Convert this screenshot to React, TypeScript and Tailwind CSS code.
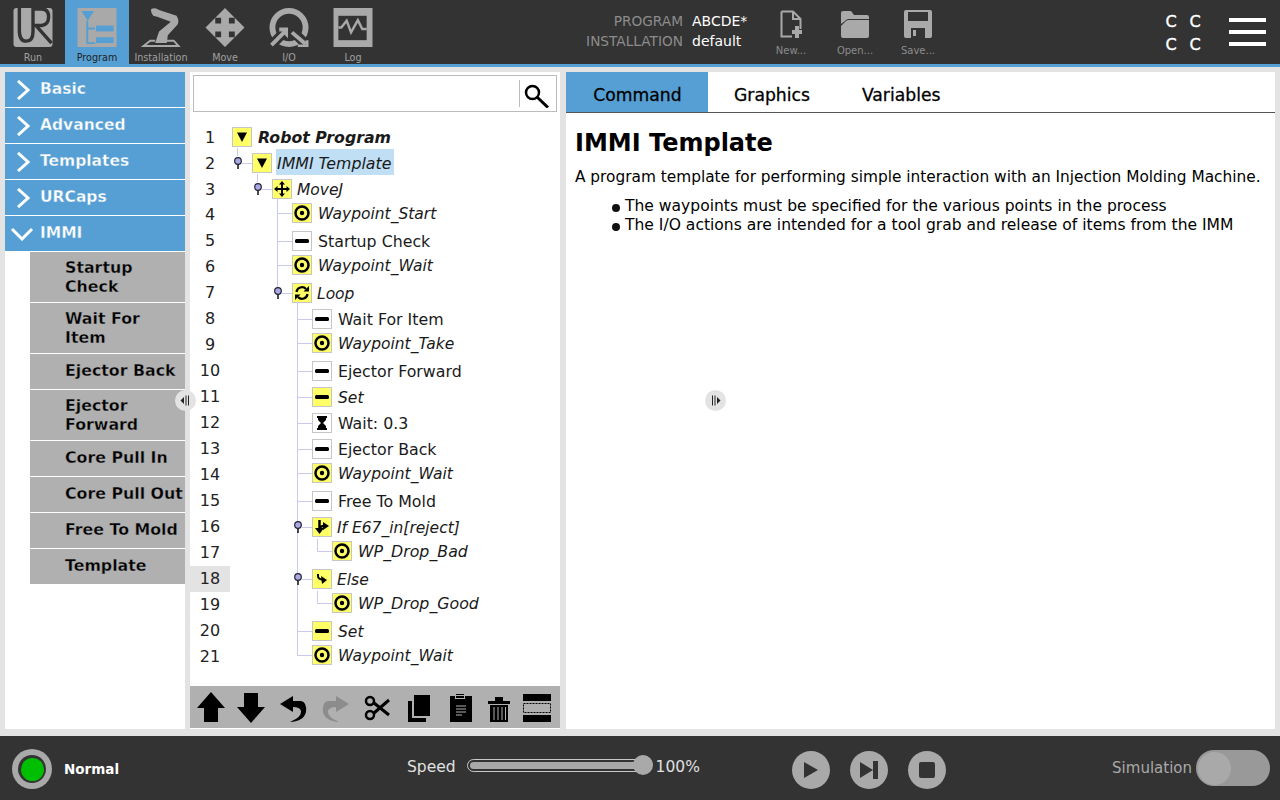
import type { ReactNode } from "react";

const GRAY = "#a9a9a9";

function RunIcon() {
  return (
    <svg width="40" height="40" viewBox="0 0 40 40">
      <rect width="40" height="40" rx="3" fill={GRAY} />
      <path d="M6 0V23Q6 34 13 34Q20 34 20 24V1H29Q36 1 36 9Q36 17 29 18H23L39 36" fill="none" stroke="#333" strokeWidth="3.5" />
    </svg>
  );
}
function ProgramIcon() {
  return (
    <svg width="40" height="40" viewBox="0 0 40 40">
      <rect width="40" height="40" fill={GRAY} />
      <path d="M4 3H17L10.5 13Z" fill="#569fd4" />
      <path d="M10 13V36H18M10 21H18" fill="none" stroke="#569fd4" strokeWidth="2" />
      <rect x="19" y="18" width="18" height="6" fill="#569fd4" />
      <rect x="19" y="30" width="18" height="6" fill="#569fd4" />
    </svg>
  );
}
function InstallIcon() {
  return (
    <svg width="40" height="40" viewBox="0 0 40 40">
      <path d="M14 33.500H9L2 39H38L33 33.500H26" fill="none" stroke={GRAY} strokeWidth="2" />
      <path d="M10 1Q14 -1 18 2L36 8Q39 13 37 17L27 28L26 36H14L18 24L30 14L16 9L12 8Q9 4 10 1Z" fill={GRAY} />
    </svg>
  );
}
function MoveIcon() {
  return (
    <svg width="40" height="40" viewBox="0 0 40 40" fill={GRAY}>
      <path d="M20 0L30 10H24V16H30V10L40 20L30 30V24H24V30H30L20 40L10 30H16V24H10V30L0 20L10 10V16H16V10H10Z" />
    </svg>
  );
}
function IoIcon() {
  return (
    <svg width="40" height="40" viewBox="0 0 40 40">
      <circle cx="20" cy="20" r="17" fill="none" stroke={GRAY} strokeWidth="6" />
      <path d="M-1 41L18 22M22 22L42 42" stroke="#333" strokeWidth="10" />
      <path d="M2 38L16 24" stroke={GRAY} strokeWidth="4" />
      <path d="M10 20H19V31L15 27L14 24H10Z" fill={GRAY} />
      <path d="M23 25L37 37" stroke={GRAY} strokeWidth="4" />
      <path d="M40 33V40H29V37.500H37V33Z" fill={GRAY} />
    </svg>
  );
}
function LogIcon() {
  return (
    <svg width="40" height="40" viewBox="0 0 40 40">
      <rect width="40" height="40" fill={GRAY} />
      <rect x="5" y="8" width="29" height="25" fill="#333" />
      <path d="M5 20H8L13.500 13L18 25L25 12.500L29.500 21.500H34" fill="none" stroke={GRAY} strokeWidth="2.500" />
    </svg>
  );
}
function NewIcon() {
  return (
    <svg width="22" height="28" viewBox="0 0 22 28" fill="none">
      <path d="M1.500 1.500H13L20.500 9V19M13 1.500V9H20.500M12 26.500H1.500V1.500" stroke={GRAY} strokeWidth="2" />
      <path d="M15 16H19V20H22V24H19V28H15V24H12V20H15Z" fill={GRAY} />
    </svg>
  );
}
function OpenIcon() {
  return (
    <svg width="28" height="28" viewBox="0 0 28 28" fill={GRAY}>
      <path d="M0 3Q0 1 2 1H10L13 5H26Q28 5 28 7V9H8Q5 9 4 11L0 14Z" />
      <path d="M0 16L5 11Q6 10 8 10H28V26Q28 28 26 28H2Q0 28 0 26Z" />
    </svg>
  );
}
function SaveIcon() {
  return (
    <svg width="28" height="28" viewBox="0 0 28 28">
      <path d="M2 0H26Q28 0 28 2V26Q28 28 26 28H2Q0 28 0 26V2Q0 0 2 0Z" fill={GRAY} />
      <rect x="4" y="2" width="20" height="9" fill="#333" />
      <rect x="7" y="18" width="14" height="10" fill="#333" />
      <rect x="9" y="20" width="3" height="6" fill={GRAY} />
    </svg>
  );
}

const navTabs: { label: string; icon: ReactNode; active?: boolean }[] = [
  { label: "Run", icon: <RunIcon /> },
  { label: "Program", icon: <ProgramIcon />, active: true },
  { label: "Installation", icon: <InstallIcon /> },
  { label: "Move", icon: <MoveIcon /> },
  { label: "I/O", icon: <IoIcon /> },
  { label: "Log", icon: <LogIcon /> },
];

function TopBar() {
  return (
    <header className="flex h-[67px] shrink-0 border-b-[3px] border-[#569fd4] bg-[#333333] pl-px">
      {navTabs.map((t) => (
        <div
          key={t.label}
          className={`flex w-16 flex-col items-center pt-2 ${t.active ? "bg-[#569fd4] text-[#222222]" : "text-[#a0a0a0]"}`}
        >
          {t.icon}
          <span className="mt-[5px] text-[9.600px] leading-[12px]">{t.label}</span>
        </div>
      ))}
      <div className="ml-[201px] flex w-[97px] flex-col items-end pt-[11px] text-[13.700px] leading-[20px] text-[#8c8c8c]">
        <span>PROGRAM</span>
        <span>INSTALLATION</span>
      </div>
      <div className="ml-[9px] flex w-[67px] flex-col pt-[11px] text-sm leading-[20px] text-white">
        <span>ABCDE*</span>
        <span>default</span>
      </div>
      <div className="flex w-16 flex-col items-center pt-[10px] text-[#8c8c8c]">
        <NewIcon />
        <span className="mt-[7px] text-[10px] leading-[12px]">New...</span>
      </div>
      <div className="flex w-16 flex-col items-center pt-[10px] text-[#8c8c8c]">
        <OpenIcon />
        <span className="mt-[7px] text-[10px] leading-[12px]">Open...</span>
      </div>
      <div className="flex w-[62px] flex-col items-center pt-[10px] text-[#8c8c8c]">
        <SaveIcon />
        <span className="mt-[7px] text-[10px] leading-[12px]">Save...</span>
      </div>
      <div className="ml-[210px] grid w-[48px] grid-cols-2 content-start gap-y-[3px] pt-[12px] text-center text-base leading-[20px] text-white [-webkit-text-stroke:0.4px_white]">
        <span>C</span>
        <span>C</span>
        <span>C</span>
        <span>C</span>
      </div>
      <div className="ml-[22px] flex w-[37px] flex-col gap-2 pt-[18px]">
        <div className="h-1 bg-white" />
        <div className="h-1 bg-white" />
        <div className="h-1 bg-white" />
      </div>
    </header>
  );
}

function Chevron({ open }: { open?: boolean }) {
  return open ? (
    <svg width="24" height="14" viewBox="0 0 24 14" className="ml-[5px]">
      <path d="M2 2L12 12L22 2" fill="none" stroke="white" strokeWidth="3" />
    </svg>
  ) : (
    <svg width="14" height="20" viewBox="0 0 14 20" className="ml-[10px] mr-[10px]">
      <path d="M2 1L12 10L2 19" fill="none" stroke="white" strokeWidth="3" />
    </svg>
  );
}

const categories = ["Basic", "Advanced", "Templates", "URCaps"];
const subItems: { label: ReactNode; tall?: boolean }[] = [
  { label: <>Startup<br />Check</>, tall: true },
  { label: <>Wait For<br />Item</>, tall: true },
  { label: "Ejector Back" },
  { label: <>Ejector<br />Forward</>, tall: true },
  { label: "Core Pull In" },
  { label: "Core Pull Out" },
  { label: "Free To Mold" },
  { label: "Template" },
];

function Sidebar() {
  return (
    <aside className="flex w-[180px] shrink-0 flex-col gap-px bg-white">
      {categories.map((c) => (
        <div key={c} className="flex h-[35px] items-center bg-[#569fd4] pl-[1px] text-[15.500px] font-bold text-white [-webkit-text-stroke:0.35px_#569fd4]">
          <Chevron />
          <span>{c}</span>
        </div>
      ))}
      <div className="flex h-[35px] items-center bg-[#569fd4] text-[15.500px] font-bold text-white [-webkit-text-stroke:0.35px_#569fd4]">
        <Chevron open />
        <span className="ml-[6px]">IMMI</span>
      </div>
      {subItems.map((s, i) => (
        <div
          key={i}
          className={`ml-[25px] flex items-center bg-[#b0b0b0] pl-[35px] text-[15.800px] leading-[19px] font-bold whitespace-nowrap text-black [-webkit-text-stroke:0.35px_#b0b0b0] ${s.tall ? "h-[50px]" : "h-[35px] pb-[2px]"}`}
        >
          <span>{s.label}</span>
        </div>
      ))}
    </aside>
  );
}

function Glyph({ kind }: { kind: string }) {
  const box = (children: ReactNode) => (
    <svg width="18" height="18" viewBox="0 0 18 18">
      {children}
    </svg>
  );
  switch (kind) {
    case "tri":
      return box(<path d="M4 4.500H14L9 14Z" fill="black" />);
    case "target":
      return box(
        <>
          <circle cx="9" cy="9" r="6.500" fill="none" stroke="black" strokeWidth="2.500" />
          <circle cx="9" cy="9" r="2.200" fill="black" />
        </>,
      );
    case "dash":
      return box(<rect x="2" y="7" width="14" height="4" rx="1.500" fill="black" />);
    case "move":
      return box(
        <path d="M9 1L12 4.500H10V8H13.500V6L17 9L13.500 12V10H10V13.500H12L9 17L6 13.500H8V10H4.500V12L1 9L4.500 6V8H8V4.500H6Z" fill="black" />,
      );
    case "loop":
      return box(
        <>
          <path d="M3.500 8A5.500 5.500 0 0 1 13 5" fill="none" stroke="black" strokeWidth="2.300" />
          <path d="M10.500 7.500H16V2Z" fill="black" />
          <path d="M14.500 10A5.500 5.500 0 0 1 5 13" fill="none" stroke="black" strokeWidth="2.300" />
          <path d="M7.500 10.500H2V16Z" fill="black" />
        </>,
      );
    case "wait":
      return box(
        <path d="M4 2H14V4H13V6L10 9L13 12V14H14V16H4V14H5V12L8 9L5 6V4H4Z" fill="black" />,
      );
    case "if":
      return box(
        <>
          <path d="M6.500 2V10" stroke="black" strokeWidth="2.500" />
          <path d="M2 10H11L6.500 16Z" fill="black" />
          <path d="M6.500 10Q8 8 10 8" fill="none" stroke="black" strokeWidth="2.500" />
          <path d="M10 4L16 8L10 12Z" fill="black" />
        </>,
      );
    case "else":
      return box(
        <>
          <path d="M5 4V6Q5 9 9 9.500" fill="none" stroke="black" strokeWidth="2" />
          <path d="M8 6L14 10L9 14Z" fill="black" />
        </>,
      );
    default:
      return null;
  }
}

type Node = {
  label: string;
  level: string;
  kind: string;
  yellow?: boolean;
  plain?: boolean;
  up?: boolean;
  selected?: boolean;
  strong?: boolean;
  tight?: boolean;
  wide?: boolean;
};

const nodes: Node[] = [
  { label: "Robot Program", level: "ml-[2px]", kind: "tri", yellow: true, strong: true },
  { label: "IMMI Template", level: "ml-[22px]", kind: "tri", yellow: true, selected: true, tight: true, wide: true },
  { label: "MoveJ", level: "ml-[42px]", kind: "move", yellow: true, tight: true },
  { label: "Waypoint_Start", level: "ml-[62px]", kind: "target", yellow: true, up: true },
  { label: "Startup Check", level: "ml-[62px]", kind: "dash", plain: true, wide: true },
  { label: "Waypoint_Wait", level: "ml-[62px]", kind: "target", yellow: true, up: true },
  { label: "Loop", level: "ml-[62px]", kind: "loop", yellow: true, tight: true },
  { label: "Wait For Item", level: "ml-[82px]", kind: "dash", plain: true, wide: true },
  { label: "Waypoint_Take", level: "ml-[82px]", kind: "target", yellow: true, up: true },
  { label: "Ejector Forward", level: "ml-[82px]", kind: "dash", plain: true, wide: true },
  { label: "Set", level: "ml-[82px]", kind: "dash", yellow: true },
  { label: "Wait: 0.3", level: "ml-[82px]", kind: "wait", plain: true, wide: true },
  { label: "Ejector Back", level: "ml-[82px]", kind: "dash", plain: true, wide: true },
  { label: "Waypoint_Wait", level: "ml-[82px]", kind: "target", yellow: true, up: true },
  { label: "Free To Mold", level: "ml-[82px]", kind: "dash", plain: true, wide: true },
  { label: "If E67_in[reject]", level: "ml-[82px]", kind: "if", yellow: true, tight: true },
  { label: "WP_Drop_Bad", level: "ml-[102px]", kind: "target", yellow: true, up: true, wide: true },
  { label: "Else", level: "ml-[82px]", kind: "else", yellow: true, tight: true },
  { label: "WP_Drop_Good", level: "ml-[102px]", kind: "target", yellow: true, up: true, wide: true },
  { label: "Set", level: "ml-[82px]", kind: "dash", yellow: true },
  { label: "Waypoint_Wait", level: "ml-[82px]", kind: "target", yellow: true, up: true },
];

// connector drawing, coordinates are relative to the tree's top left corner
function TreeLines() {
  const hLines = [89, 117, 141, 195, 219, 247, 273, 299, 325, 349, 377, 507, 531];
  const pins: [number, number][] = [[48, 37], [68, 63], [88, 167], [108, 401], [108, 453]];
  return (
    <svg className="pointer-events-none absolute top-0 left-0" width="370" height="546" viewBox="0 0 370 546">
      <g stroke="#c9c9f2" strokeWidth="1" fill="none">
        <path d="M47.500 24V32M67.500 50V58M87.500 74V164M107.500 178V531.500M127.500 415V427.500H142M127.500 467V479.500H142" />
        <path d="M52 39.500H62M72 65.500H82M92 169.500H102M112 403.500H122M112 455.500H122" />
        {hLines.map((y) => (
          <path key={y} d={`M${y < 150 ? 87.5 : 107.5} ${y + 0.5}H${y < 150 ? 102 : 122}`} />
        ))}
      </g>
      {pins.map(([x, y]) => (
        <g key={`${x}-${y}`}>
          <path d={`M${x} ${y}V${y + 8}`} stroke="#111" strokeWidth="1.500" />
          <circle cx={x} cy={y} r="3.300" fill="#a9a9e6" stroke="#223" strokeWidth="1.200" />
        </g>
      ))}
    </svg>
  );
}

function TreeRow({ node, num }: { node: Node; num: number }) {
  const labelClass = node.strong ? "text-[15.750px] font-bold italic" : node.plain ? "" : "italic";
  let labelShift = "pt-[4px]";
  if (node.selected) labelShift = "-translate-y-px bg-[#c0dff5] pt-[4px] pr-[3px]";
  else if (node.strong || node.wide) labelShift = "pt-[2px]";
  return (
    <div className="flex h-[26px] items-center">
      <div className={`flex h-[26px] w-10 shrink-0 items-center justify-center text-base text-[#222222] ${num < 4 ? "pt-[2px]" : ""} ${num === 18 ? "bg-[#e3e3e3]" : ""}`}>
        {num}
      </div>
      <div className={`flex items-center ${node.level} ${node.up ? "-translate-y-0.5" : ""}`}>
        <div
          className={`flex h-5 w-5 items-center justify-center border border-[#c6c6c6] ${node.yellow ? "bg-[#ffff66]" : "bg-white"}`}
        >
          <Glyph kind={node.kind} />
        </div>
        <span
          className={`flex h-[26px] items-center px-px whitespace-nowrap text-[#1a1a1a] ${node.tight ? "ml-[4px]" : "ml-[5px]"} ${node.wide ? "text-[15.800px]" : ""} ${labelClass} ${labelShift}`}
        >
          {node.label}
        </span>
      </div>
    </div>
  );
}

function Toolbar() {
  return (
    <div className="mt-[16px] flex h-[42px] items-center bg-[#b0b0b0]">
      <svg width="370" height="42" viewBox="0 0 370 42">
        <path d="M21 6L35 22H28V36H14V22H7Z" />
        <path d="M54 7H68V21H75L61 37L47 21H54Z" />
        <path d="M103 9V14H111Q117 15 116 25Q114 34 100 35Q112 30 111 24Q110 20 103 20V25L90 17Z" transform="translate(0 1)" />
        <g fill="#8c8c8c">
          <path d="M146 9V14H138Q132 15 133 25Q135 34 149 35Q137 30 138 24Q139 20 146 20V25L159 17Z" transform="translate(0 1)" />
        </g>
        <g fill="none" stroke="black" strokeWidth="2.500">
          <circle cx="180" cy="15" r="4" />
          <circle cx="180" cy="29" r="4" />
          <path d="M184 17L199 29M184 27L199 14" strokeWidth="3" />
        </g>
        <path d="M224 9H240V30H224Z" />
        <path d="M218 15H222V32H236V36H218Z" />
        <path d="M260 10H266V8H274V10H282V36H260Z" />
        <rect x="265" y="9" width="10" height="4" fill="#b0b0b0" />
        <rect x="266" y="10" width="8" height="2" />
        <path d="M266 20H276M266 23H276M266 26H276M266 29H272" stroke="#b0b0b0" strokeWidth="1" />
        <path d="M298 15H320V18H298ZM305 11H313V15H305Z" />
        <path d="M300 19H318V36H300Z" />
        <path d="M304 21V34M308 21V34M312 21V34M315.500 21V34" stroke="#b0b0b0" strokeWidth="1" />
        <rect x="333" y="8" width="28" height="7" />
        <rect x="333" y="29" width="28" height="7" />
        <rect x="333.500" y="17.500" width="27" height="9" fill="none" stroke="black" strokeDasharray="2 1" />
      </svg>
    </div>
  );
}

function ProgramTree() {
  return (
    <section className="flex w-[370px] shrink-0 flex-col bg-white text-[15.500px]">
      <div className="px-[3px] pt-[3px]">
        <div className="flex h-[37px] items-center border border-[#bbbbbb] pl-[325px]">
          <div className="flex h-[27px] items-center border-l border-[#bbbbbb] pl-[3px]">
            <svg width="28" height="28" viewBox="0 0 28 28" fill="none" stroke="black">
              <circle cx="9.500" cy="12.500" r="6.500" strokeWidth="2.500" />
              <path d="M14 17L25 27.500" strokeWidth="3" />
            </svg>
          </div>
        </div>
      </div>
      <div className="relative mt-3">
        {nodes.map((n, i) => (
          <TreeRow key={i} node={n} num={i + 1} />
        ))}
        <TreeLines />
      </div>
      <Toolbar />
    </section>
  );
}

function CommandPanel() {
  return (
    <section className="relative flex-1 bg-white">
      <div className="flex h-[41px] border-b border-[#555555] pt-0 text-[17.200px] [-webkit-text-stroke:0.3px_black]">
        <div className="flex w-[142px] items-center justify-center bg-[#569fd4] pt-[8px] pl-[1px] text-black">Command</div>
        <div className="flex items-center px-[26px] pt-[8px]">Graphics</div>
        <div className="flex items-center px-[26px] pt-[8px]">Variables</div>
      </div>
      <div className="px-[9px] pt-[15px] text-[15.550px] text-black">
        <h1 className="text-2xl leading-[30px] font-bold">IMMI Template</h1>
        <p className="mt-[10px] text-[15.350px] leading-[19px]">
          A program template for performing simple interaction with an Injection Molding Machine.
        </p>
        <ul className="mt-[10px] ml-[37px] leading-[19px]">
          <li className="flex items-center gap-[5px]">
            <span className="mt-[3px] h-2 w-2 rounded-full bg-[#111111]" />
            The waypoints must be specified for the various points in the process
          </li>
          <li className="flex items-center gap-[5px]">
            <span className="mt-[3px] h-2 w-2 rounded-full bg-[#111111]" />
            The I/O actions are intended for a tool grab and release of items from the IMM
          </li>
        </ul>
      </div>
    </section>
  );
}

function Handle({ flip, className }: { flip?: boolean; className: string }) {
  return (
    <div className={`absolute flex h-[21px] w-[21px] items-center justify-center rounded-full bg-[#e3e3e3] ${className}`}>
      <svg width="11" height="11" viewBox="0 0 11 11" className={flip ? "rotate-180" : ""}>
        <path d="M4 2V9L0.500 5.500Z" fill="#222" />
        <path d="M6 0.500V10.500M8.500 0.500V10.500" stroke="#222" strokeWidth="1" />
      </svg>
    </div>
  );
}

function BottomBar() {
  return (
    <footer className="flex h-[64px] shrink-0 items-center bg-[#333333] pt-[2px]">
      <div className="ml-3 flex h-10 w-10 items-center justify-center rounded-full bg-[#a9a9a9]">
        <div className="flex h-7 w-7 items-center justify-center rounded-full bg-[#333333]">
          <div className="h-[23px] w-[23px] rounded-full bg-[#00bf00]" />
        </div>
      </div>
      <span className="ml-3 w-[100px] text-[13.500px] font-bold text-white">Normal</span>
      <span className="mb-[2px] ml-[243px] text-[15.500px] text-[#e0e0e0]">Speed</span>
      <div className="relative mb-[8px] ml-[11px] flex h-[13px] w-[176px] items-center rounded-full border border-[#c8c8c8] p-[2px]">
        <div className="h-[7px] w-full rounded-full bg-[#a9a9a9]" />
        <div className="absolute -right-[11px] h-5 w-5 rounded-full bg-[#a9a9a9]" />
      </div>
      <span className="mb-[2px] ml-[13px] text-[15.500px] text-[#e0e0e0]">100%</span>
      <div className="mt-[2px] ml-[92px] flex gap-5">
        <div className="flex h-[38px] w-[38px] items-center justify-center rounded-full bg-[#a9a9a9]">
          <svg width="16" height="18" viewBox="0 0 16 18"><path d="M1 1L15 9L1 17Z" fill="#333" /></svg>
        </div>
        <div className="flex h-[38px] w-[38px] items-center justify-center rounded-full bg-[#a9a9a9]">
          <svg width="18" height="18" viewBox="0 0 18 18"><path d="M0 1L13 9L0 17ZM13 0H18V18H13Z" fill="#333" /></svg>
        </div>
        <div className="flex h-[38px] w-[38px] items-center justify-center rounded-full bg-[#a9a9a9]">
          <div className="h-[16px] w-[16px] rounded-[2px] bg-[#333333]" />
        </div>
      </div>
      <span className="mb-[2px] ml-auto text-[15px] text-[#a9a9a9]">Simulation</span>
      <div className="mr-[10px] mb-[2px] ml-1 flex h-9 w-[74px] items-center rounded-full bg-[#999999] pl-0.5">
        <div className="h-[33px] w-[33px] rounded-full bg-[#a9a9a9]" />
      </div>
    </footer>
  );
}

export default function App() {
  return (
    <div className="flex h-[800px] w-[1280px] flex-col overflow-hidden bg-[#e3e3e3] font-['DejaVu_Sans',sans-serif] text-base">
      <TopBar />
      <main className="relative flex flex-1 gap-[5px] px-[5px] pt-[5px] pb-[7px]">
        <Sidebar />
        <ProgramTree />
        <div className="flex-1 pl-px">
          <div className="flex h-full">
            <CommandPanel />
          </div>
        </div>
        <Handle className="top-[323px] left-[175px]" />
        <Handle flip className="top-[323px] left-[705px]" />
      </main>
      <BottomBar />
    </div>
  );
}
